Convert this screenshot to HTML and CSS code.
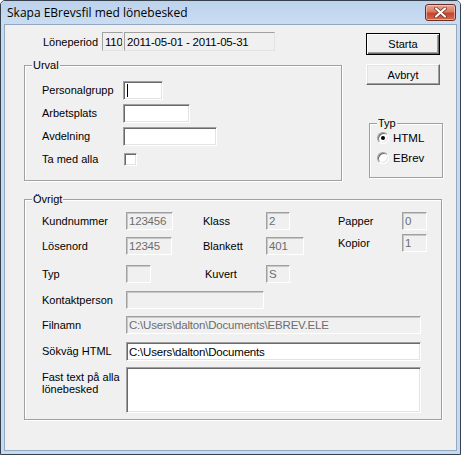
FILE: index.html
```html
<!DOCTYPE html>
<html lang="sv">
<head>
<meta charset="utf-8">
<title>Skapa EBrevsfil med lönebesked</title>
<link rel="stylesheet" href="styles.css">
</head>
<body>
<div class="window">
  <div class="titlebar">
    <span class="title">Skapa EBrevsfil med lönebesked</span>
    <div class="close">
      <svg width="13" height="11" viewBox="0 0 13 11"><path d="M2 1.5 L11 9.5 M11 1.5 L2 9.5" stroke="#6a2a1e" stroke-width="3.6" stroke-linecap="round"/><path d="M2 1.5 L11 9.5 M11 1.5 L2 9.5" stroke="#ffffff" stroke-width="2.2" stroke-linecap="round"/></svg>
    </div>
  </div>
  <div class="client">
    <div class="top">
      <div class="leftcol">
        <div class="period">
          <span class="plabel">Löneperiod</span>
          <span class="field ro-black w21">110</span>
          <span class="field ro-black w151">2011-05-01 - 2011-05-31</span>
        </div>
        <div class="group urval">
          <span class="legend">Urval</span>
          <div class="urval-grid">
            <span class="lbl">Personalgrupp</span><span class="field edit w40"><span class="caret"></span></span>
            <span class="lbl">Arbetsplats</span><span class="field edit w67"></span>
            <span class="lbl">Avdelning</span><span class="field edit w94"></span>
            <span class="lbl">Ta med alla</span><span class="checkbox"></span>
          </div>
        </div>
      </div>
      <div class="rightcol">
        <div class="btn default">Starta</div>
        <div class="btn cancel">Avbryt</div>
        <div class="group typ">
          <span class="legend">Typ</span>
          <div class="radio-row"><span class="radio checked"></span><span>HTML</span></div>
          <div class="radio-row"><span class="radio"></span><span>EBrev</span></div>
        </div>
      </div>
    </div>
    <div class="group ovrigt">
      <span class="legend">Övrigt</span>
      <div class="ovrigt-grid">
        <span class="lbl">Kundnummer</span><span class="field ro w47">123456</span>
        <span class="lbl">Klass</span><span class="field ro w24">2</span>
        <span class="lbl">Papper</span><span class="field ro w25">0</span>

        <span class="lbl">Lösenord</span><span class="field ro w46">12345</span>
        <span class="lbl">Blankett</span><span class="field ro w38">401</span>
        <span class="lbl up">Kopior</span><span class="field ro w25 up">1</span>

        <span class="lbl">Typ</span><span class="field ro w25"></span>
        <span class="lbl nudge">Kuvert</span><span class="field ro w24">S</span>
        <span class="empty"></span><span class="empty"></span>

        <span class="lbl">Kontaktperson</span><span class="field ro w138 span5"></span>

        <span class="lbl">Filnamn</span><span class="field ro w295 span5">C:\Users\dalton\Documents\EBREV.ELE</span>

        <span class="lbl">Sökväg HTML</span><span class="field edit w295 span5">C:\Users\dalton\Documents</span>

        <span class="lbl two">Fast text på alla<br>lönebesked</span><span class="field edit w295 h46 span5"></span>
      </div>
    </div>
  </div>
</div>
</body>
</html>
```
FILE: styles.css
```css
html, body {
  margin: 0;
  padding: 0;
  background: #ffffff;
}

.window {
  width: 461px;
  height: 455px;
  box-sizing: border-box;
  border: 1px solid #37414d;
  border-radius: 5px 5px 0 0;
  background: #c6daf0;
  display: flex;
  flex-direction: column;
  font-family: "Liberation Sans", Arial, sans-serif;
  font-size: 11px;
  color: #000;
}

.titlebar {
  height: 23px;
  display: flex;
  justify-content: space-between;
  align-items: flex-start;
  background: linear-gradient(to bottom, #bcd3ec, #cadcf1);
  border-radius: 4px 4px 0 0;
}

.title {
  font-family: "Open Sans", "Noto Sans", sans-serif;
  font-size: 12px;
  line-height: 16px;
  padding: 4px 0 0 6px;
  color: #000;
}

.close {
  width: 31px;
  height: 17px;
  box-sizing: border-box;
  margin: 3px 4px 0 0;
  border: 1px solid #6b2e24;
  border-radius: 3px;
  background: linear-gradient(to bottom, #e8a693 0%, #d77a63 45%, #c4452c 55%, #d36a4e 100%);
  box-shadow: inset 0 0 0 1px rgba(255, 220, 210, 0.55);
  display: flex;
  align-items: center;
  justify-content: center;
}

.client {
  flex: 1;
  margin: 0 3px 3px 3px;
  border: 1px solid #93a9c2;
  background: #f0f0f0;
  padding: 7px 14px 0 19px;
  display: flex;
  flex-direction: column;
}

.top {
  display: flex;
  gap: 24px;
}

.leftcol {
  width: 318px;
  display: flex;
  flex-direction: column;
}

.rightcol {
  width: 77px;
  display: flex;
  flex-direction: column;
}

.period {
  display: flex;
  align-items: center;
  height: 19px;
  padding-left: 19px;
}

.plabel {
  width: 59px;
}

/* sunken fields */
.field {
  box-sizing: border-box;
  height: 19px;
  display: inline-flex;
  align-items: center;
  padding-left: 2px;
  white-space: nowrap;
  overflow: hidden;
  border-style: solid;
  border-width: 1px;
  border-color: #a0a0a0 #ffffff #ffffff #a0a0a0;
  font-size: 11.5px;
  letter-spacing: -0.2px;
}

.edit {
  background: #ffffff;
  box-shadow: inset 1px 1px 0 #696969, inset -1px -1px 0 #e3e3e3;
  color: #000;
}

.ro {
  background: #f0f0f0;
  box-shadow: inset 1px 1px 0 #c8c8c8;
  color: #6d6d6d;
  height: 18px;
}

.ro-black {
  background: #f0f0f0;
  border-color: #a0a0a0 #e3e3e3 #e3e3e3 #a0a0a0;
  color: #000;
}

.w21 { width: 21px; margin-right: 1px; }
.w151 { width: 151px; }
.w40 { width: 40px; }
.w67 { width: 67px; }
.w94 { width: 94px; }
.w47 { width: 47px; }
.w46 { width: 46px; }
.w25 { width: 25px; }
.w24 { width: 24px; }
.w38 { width: 38px; }
.w138 { width: 138px; }
.w295 { width: 295px; }
.h46 { height: 46px; }

.caret {
  width: 1px;
  height: 13px;
  background: #000;
  margin-left: 1px;
}

/* group boxes */
.group {
  position: relative;
  box-sizing: border-box;
  border: 1px solid #a0a0a0;
  box-shadow: inset 1px 1px 0 #ffffff, 1px 1px 0 #ffffff;
}

.legend {
  position: absolute;
  top: -7px;
  left: 7px;
  padding: 0 1px;
  background: #f0f0f0;
  line-height: 13px;
}

.urval {
  margin-top: 14px;
  width: 318px;
  height: 116px;
  padding: 15px 0 0 17px;
}

.urval-grid {
  display: grid;
  grid-template-columns: 81px auto;
  grid-auto-rows: 19px;
  row-gap: 4px;
  align-items: center;
  justify-items: start;
}

.lbl {
  line-height: 13px;
}

.checkbox {
  width: 13px;
  height: 13px;
  box-sizing: border-box;
  margin-left: 1px;
  border: 1px solid;
  border-color: #a0a0a0 #ffffff #ffffff #a0a0a0;
  background: #ffffff;
  box-shadow: inset 1px 1px 0 #696969, inset -1px -1px 0 #e3e3e3;
}

/* buttons */
.btn {
  box-sizing: border-box;
  width: 74px;
  display: flex;
  align-items: center;
  justify-content: center;
  background: #f0f0f0;
  font-size: 11px;
}

.btn.default {
  height: 22px;
  margin-top: 1px;
  border: 1px solid #000;
  box-shadow: inset 1px 1px 0 #ffffff, inset -1px -1px 0 #696969, inset -2px -2px 0 #a0a0a0;
}

.btn.cancel {
  height: 21px;
  margin-top: 9px;
  border: 1px solid;
  border-color: #ffffff #696969 #696969 #ffffff;
  box-shadow: inset -1px -1px 0 #a0a0a0, inset 1px 1px 0 #e3e3e3;
}

.typ {
  margin-top: 38px;
  margin-left: 3px;
  width: 74px;
  height: 55px;
  padding: 4px 0 0 7px;
}

.radio-row {
  height: 20px;
  display: flex;
  align-items: center;
  gap: 4px;
  font-size: 11.5px;
}

.radio {
  position: relative;
  width: 12px;
  height: 12px;
  box-sizing: border-box;
  border-radius: 50%;
  border: 1px solid;
  border-color: #a0a0a0 #ffffff #ffffff #a0a0a0;
  background: #ffffff;
  box-shadow: inset 1px 1px 0 #696969, inset -1px -1px 0 #e3e3e3;
}

.radio.checked::after {
  content: "";
  position: absolute;
  left: 3px;
  top: 3px;
  width: 4px;
  height: 4px;
  border-radius: 50%;
  background: #000;
}

.ovrigt {
  margin-top: 18px;
  width: 418px;
  height: 221px;
  padding: 12px 0 0 17px;
}

.ovrigt-grid {
  display: grid;
  grid-template-columns: 84px 77px 63px 72px 64px 40px;
  grid-template-rows: 25px 28px 26px 25px 26px 25px 46px;
  align-items: start;
  justify-items: start;
}

.ovrigt-grid .lbl {
  line-height: 18px;
}

.ovrigt-grid .lbl.two {
  line-height: 12px;
  padding-top: 4px;
}

.span5 {
  grid-column: 2 / span 5;
}

.up {
  margin-top: -3px;
}

.nudge {
  margin-left: 2px;
}
```
